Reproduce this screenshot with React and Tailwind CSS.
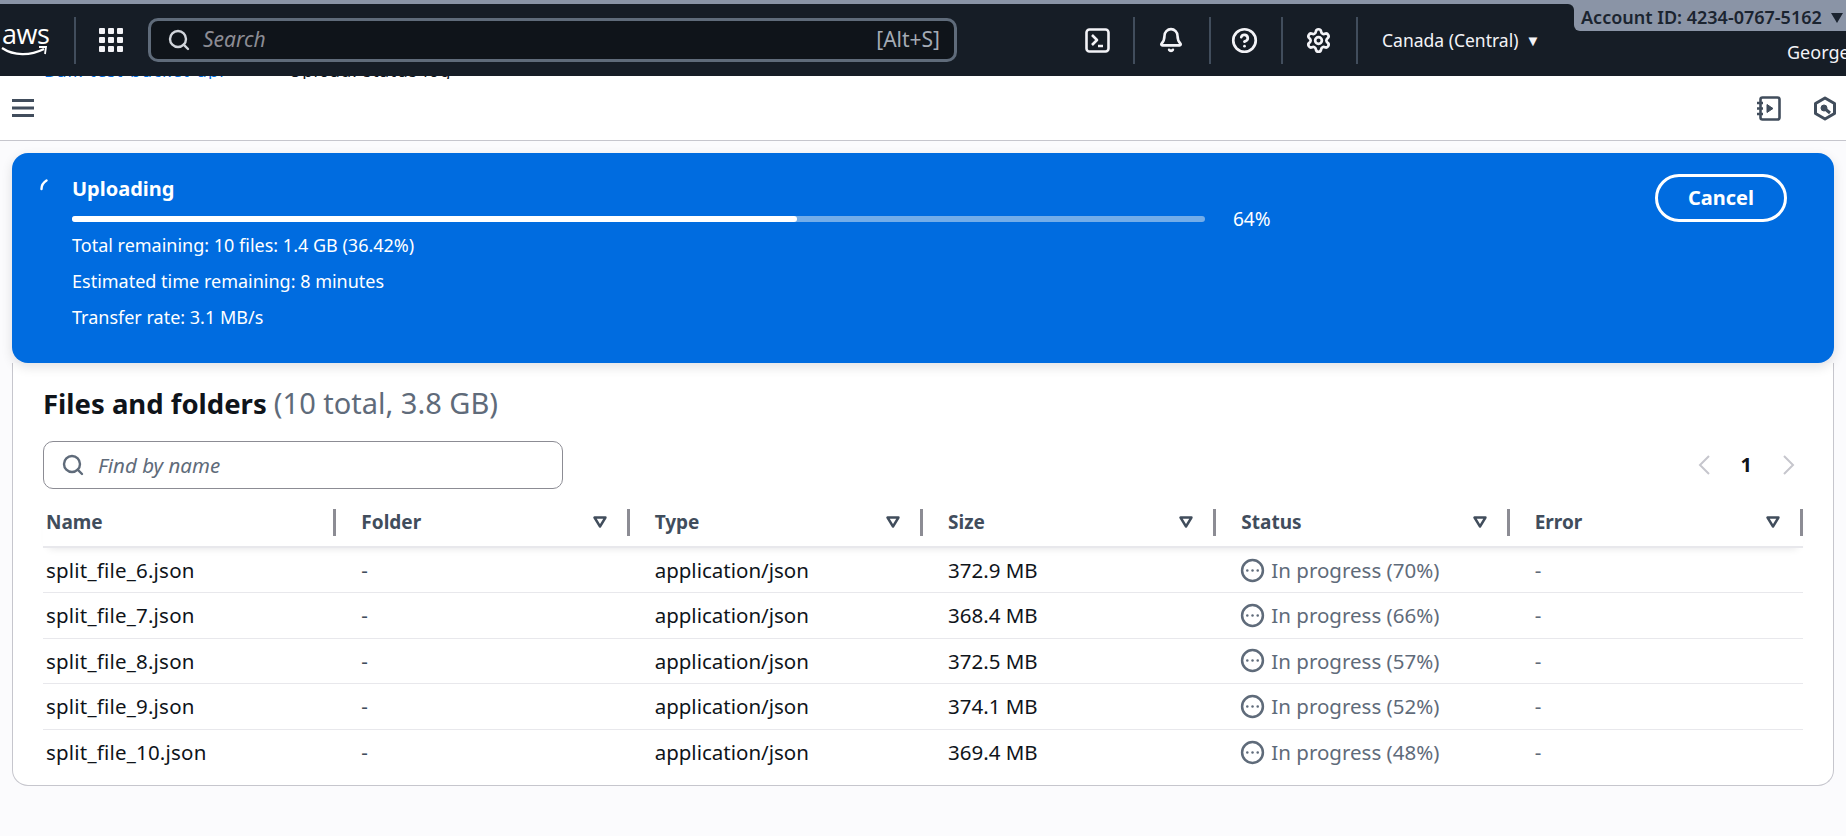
import React from 'react';
import { Bell, CircleHelp, Settings, Search, CircleEllipsis } from 'lucide-react';

const files = [
  { name: 'split_file_6.json', size: '372.9 MB', pct: 70 },
  { name: 'split_file_7.json', size: '368.4 MB', pct: 66 },
  { name: 'split_file_8.json', size: '372.5 MB', pct: 57 },
  { name: 'split_file_9.json', size: '374.1 MB', pct: 52 },
  { name: 'split_file_10.json', size: '369.4 MB', pct: 48 },
];

const columns = ['Folder', 'Type', 'Size', 'Status', 'Error'];

const NavDivider = () => <span className="w-[2px] h-[47px] bg-[#414d5c]" />;

const FilterIcon = () => (
  <svg width="14" height="12" viewBox="0 0 14 12" fill="none" stroke="#414d5c" strokeWidth="2.4" strokeLinejoin="round">
    <path d="M1.5 1.5h11L7 10.5z" />
  </svg>
);

const NavBar = () => (
  <div className="flex h-[72px] bg-[#161d26] text-white">
    <div className="flex items-center flex-1">
      <div className="relative w-[74px] h-[47px] shrink-0">
        <span className="absolute left-[2px] top-[3px] text-[27px] leading-[28px] font-['Open_Sans',sans-serif] tracking-[-0.5px]">aws</span>
        <svg className="absolute left-[0px] top-[28px]" width="50" height="14" viewBox="0 0 50 14" fill="none" stroke="white" strokeWidth="2.2">
          <path d="M2 3c12 8 28 8 42 1" />
          <path d="M39 2h7l-1 7" strokeWidth="1.8" />
        </svg>
      </div>
      <NavDivider />
      <div className="grid grid-cols-3 gap-[3px] ml-[23px] w-[24px] shrink-0">
        {[...Array(9)].map((_, i) => (
          <span key={i} className="w-[6px] h-[6px] rounded-[1px] bg-[#f3f3f7]" />
        ))}
      </div>
      <div className="flex items-center w-[809px] h-[44px] ml-[25px] pl-[16px] pr-[17px] shrink-0 border-[3px] border-[#5f6b7a] rounded-[10px] bg-[#0f141a]">
        <Search size={24} strokeWidth={2.4} className="text-[#d1d5db]" />
        <span className="ml-[12px] text-[21px] italic text-[#8c8c94]">Search</span>
        <span className="ml-auto -mr-[3px] text-[21px] text-[#a4abb5]">[Alt+S]</span>
      </div>
      <svg className="ml-[128px] shrink-0" width="25" height="25" viewBox="0 0 25 25" fill="none" stroke="#f3f3f7" strokeWidth="2.6" strokeLinejoin="round">
        <rect x="1.5" y="1.5" width="22" height="22" rx="3" />
        <path d="M7 7l5 5-5 5M13 18h5" />
      </svg>
      <span className="ml-[23px] flex"><NavDivider /></span>
      <Bell size={26} strokeWidth={2.4} className="ml-[23px] text-[#f3f3f7]" />
      <span className="ml-[25px] flex"><NavDivider /></span>
      <CircleHelp size={27} strokeWidth={2.4} className="ml-[20px] text-[#f3f3f7]" />
      <span className="ml-[23px] flex"><NavDivider /></span>
      <Settings size={27} strokeWidth={2.4} className="ml-[22px] text-[#f3f3f7]" />
      <span className="ml-[24px] flex"><NavDivider /></span>
      <span className="ml-[24px] text-[17.500px] text-[#f3f3f7] whitespace-nowrap">Canada (Central)</span>
      <span className="ml-[7px] text-[15px] text-[#f3f3f7]">▼</span>
    </div>
    <div className="w-[272px] shrink-0 flex flex-col">
      <div className="relative h-[27px] flex items-center pl-[7px] bg-[#8a94a6] rounded-bl-[6px] text-[#1b2430] text-[18px] font-semibold whitespace-nowrap">
        <span className="absolute -left-[6px] top-0 w-[6px] h-[6px] bg-[#8a94a6]">
          <span className="block w-full h-full bg-[#161d26] rounded-tr-[6px]" />
        </span>
        Account ID: 4234-0767-5162
        <svg className="ml-[9px] shrink-0" width="12" height="10" viewBox="0 0 12 10" fill="#1b2430">
          <path d="M0 0h12L6 10z" />
        </svg>
      </div>
      <span className="ml-[213px] mt-[9px] text-[18px] leading-[24px] text-[#f3f3f7] whitespace-nowrap">George</span>
    </div>
  </div>
);

const ToolBar = () => (
  <div className="h-[65px] bg-white border-b border-[#c6c6cd] overflow-hidden">
    <div className="h-[3px] overflow-hidden flex items-end text-[17px] leading-[3px] pl-[44px] tracking-[1px]">
      <span className="-translate-y-[7px] text-[#006ce0]">Bulk-test-bucket-upl</span>
      <span className="-translate-y-[7px] ml-[64px] text-[#0f141a]">Upload: status log</span>
    </div>
    <div className="flex items-center h-[44px] mt-[7px]">
      <svg className="ml-[12px]" width="22" height="18" viewBox="0 0 22 18" fill="#414d5c">
        <rect width="22" height="3" y="0" />
        <rect width="22" height="3" y="7.5" />
        <rect width="22" height="3" y="15" />
      </svg>
      <svg className="ml-auto" width="25" height="25" viewBox="0 0 25 25" fill="none" stroke="#414d5c" strokeWidth="2.6" strokeLinejoin="round">
        <rect x="4.5" y="1.5" width="19" height="22" rx="2" />
        <path d="M1 7h6M1 12.5h6M1 18h6" />
        <path d="M11 8.500l6 4-6 4z" fill="#414d5c" strokeWidth="1" />
      </svg>
      <svg className="ml-[32px] mr-[9px]" width="24" height="25" viewBox="0 0 24 25" fill="none" stroke="#414d5c" strokeWidth="3" strokeLinejoin="round">
        <path d="M12 2l9.500 5.500v10L12 23l-9.500-5.500v-10z" />
        <circle cx="11" cy="12" r="3" fill="#414d5c" strokeWidth="1" />
        <path d="M11 12l6 5" />
      </svg>
    </div>
  </div>
);

const UploadFlash = () => (
  <div className="relative z-10 flex mt-[12px] mx-[12px] pl-[28px] pr-[47px] pt-[21px] pb-[27px] h-[210px] rounded-[16px] bg-[#006ce0] text-white shadow-[0_4px_12px_rgba(0,7,22,0.12)]">
    <svg className="mt-[5px] shrink-0" width="8" height="12" viewBox="0 0 8 12" fill="none" stroke="white" strokeWidth="2.4" strokeLinecap="round">
      <path d="M1.500 10c0-3.500 1.800-6.500 5-8.500" />
    </svg>
    <div className="ml-[24px] flex-1">
      <div className="mt-[3px] text-[20px] leading-[24px] font-bold">Uploading</div>
      <div className="flex items-center h-[16px] mt-[10px]">
        <div className="w-[1133px] h-[6px] rounded-full bg-[#73ade9]">
          <div className="h-full w-[64%] rounded-full bg-white" />
        </div>
        <span className="ml-[28px] text-[19px]">64%</span>
      </div>
      <div className="text-[18px] leading-[36px]">
        <div>Total remaining: 10 files: 1.4 GB (36.42%)</div>
        <div>Estimated time remaining: 8 minutes</div>
        <div>Transfer rate: 3.1 MB/s</div>
      </div>
    </div>
    <button className="w-[132px] h-[48px] rounded-full border-[3px] border-white text-[20px] font-bold">Cancel</button>
  </div>
);

const FilesTable = () => (
  <div className="mx-[12px] px-[30px] pt-[22px] pb-[10px] bg-white border-x border-b border-[#c6c6cd] rounded-b-[16px]">
    <h2 className="text-[27.500px] leading-[36px] font-bold text-[#0f141a]">
      Files and folders <span className="text-[29px] font-normal text-[#5f6b7a]">(10 total, 3.8 GB)</span>
    </h2>
    <div className="flex items-center justify-between mt-[19px]">
      <div className="flex items-center w-[520px] h-[48px] pl-[17px] border border-[#8c8c94] rounded-[10px]">
        <Search size={24} strokeWidth={2.4} className="text-[#5f6b7a]" />
        <span className="ml-[13px] text-[20.500px] italic text-[#5f6b7a]">Find by name</span>
      </div>
      <div className="flex items-center mr-[7px] text-[#c6c6cd]">
        <svg width="14" height="22" viewBox="0 0 14 22" fill="none" stroke="currentColor" strokeWidth="2"><path d="M12 2L3 11l9 9" /></svg>
        <span className="mx-[30px] text-[20px] font-bold text-[#0f141a]">1</span>
        <svg width="14" height="22" viewBox="0 0 14 22" fill="none" stroke="currentColor" strokeWidth="2"><path d="M2 2l9 9-9 9" /></svg>
      </div>
    </div>
    <div className="grid grid-cols-6 h-[50px] mt-[9px] border-b-2 border-[#e8e8ec] shadow-[0_6px_8px_-6px_rgba(0,7,22,0.12)] text-[19px] font-bold text-[#414d5c]">
      <div className="flex items-center justify-between pl-[3px]">
        Name
        <span className="w-[3px] h-[27px] bg-[#8c8c94]" />
      </div>
      {columns.map((col) => (
        <div key={col} className="flex items-center pl-[25px]">
          {col}
          <span className="ml-auto mr-[20px] flex"><FilterIcon /></span>
          <span className="w-[3px] h-[27px] bg-[#8c8c94]" />
        </div>
      ))}
    </div>
    {files.map((file, i) => (
      <div key={file.name} className={`grid grid-cols-6 items-center h-[45.4px] text-[20.500px] text-[#414d5c] ${i < files.length - 1 ? 'border-b border-[#e8e8ec]' : ''}`}>
        <div className="pl-[3px] text-[#0f141a] tracking-[0.2px]">{file.name}</div>
        <div className="pl-[25px]">-</div>
        <div className="pl-[25px] text-[#0f141a]">application/json</div>
        <div className="pl-[25px] text-[#0f141a]">{file.size}</div>
        <div className="flex items-center pl-[25px] text-[#5f6b7a]">
          <CircleEllipsis size={25} strokeWidth={2.4} className="-ml-px" />
          <span className="ml-[6px]">In progress ({file.pct}%)</span>
        </div>
        <div className="pl-[25px] text-[#5f6b7a]">-</div>
      </div>
    ))}
  </div>
);

export default function App() {
  return (
    <div className="min-h-[836px] overflow-hidden bg-[#fbfbfd] font-['Noto_Sans',sans-serif]">
      <div className="h-[4px] bg-[#8a94a6]" />
      <NavBar />
      <ToolBar />
      <UploadFlash />
      <FilesTable />
    </div>
  );
}
